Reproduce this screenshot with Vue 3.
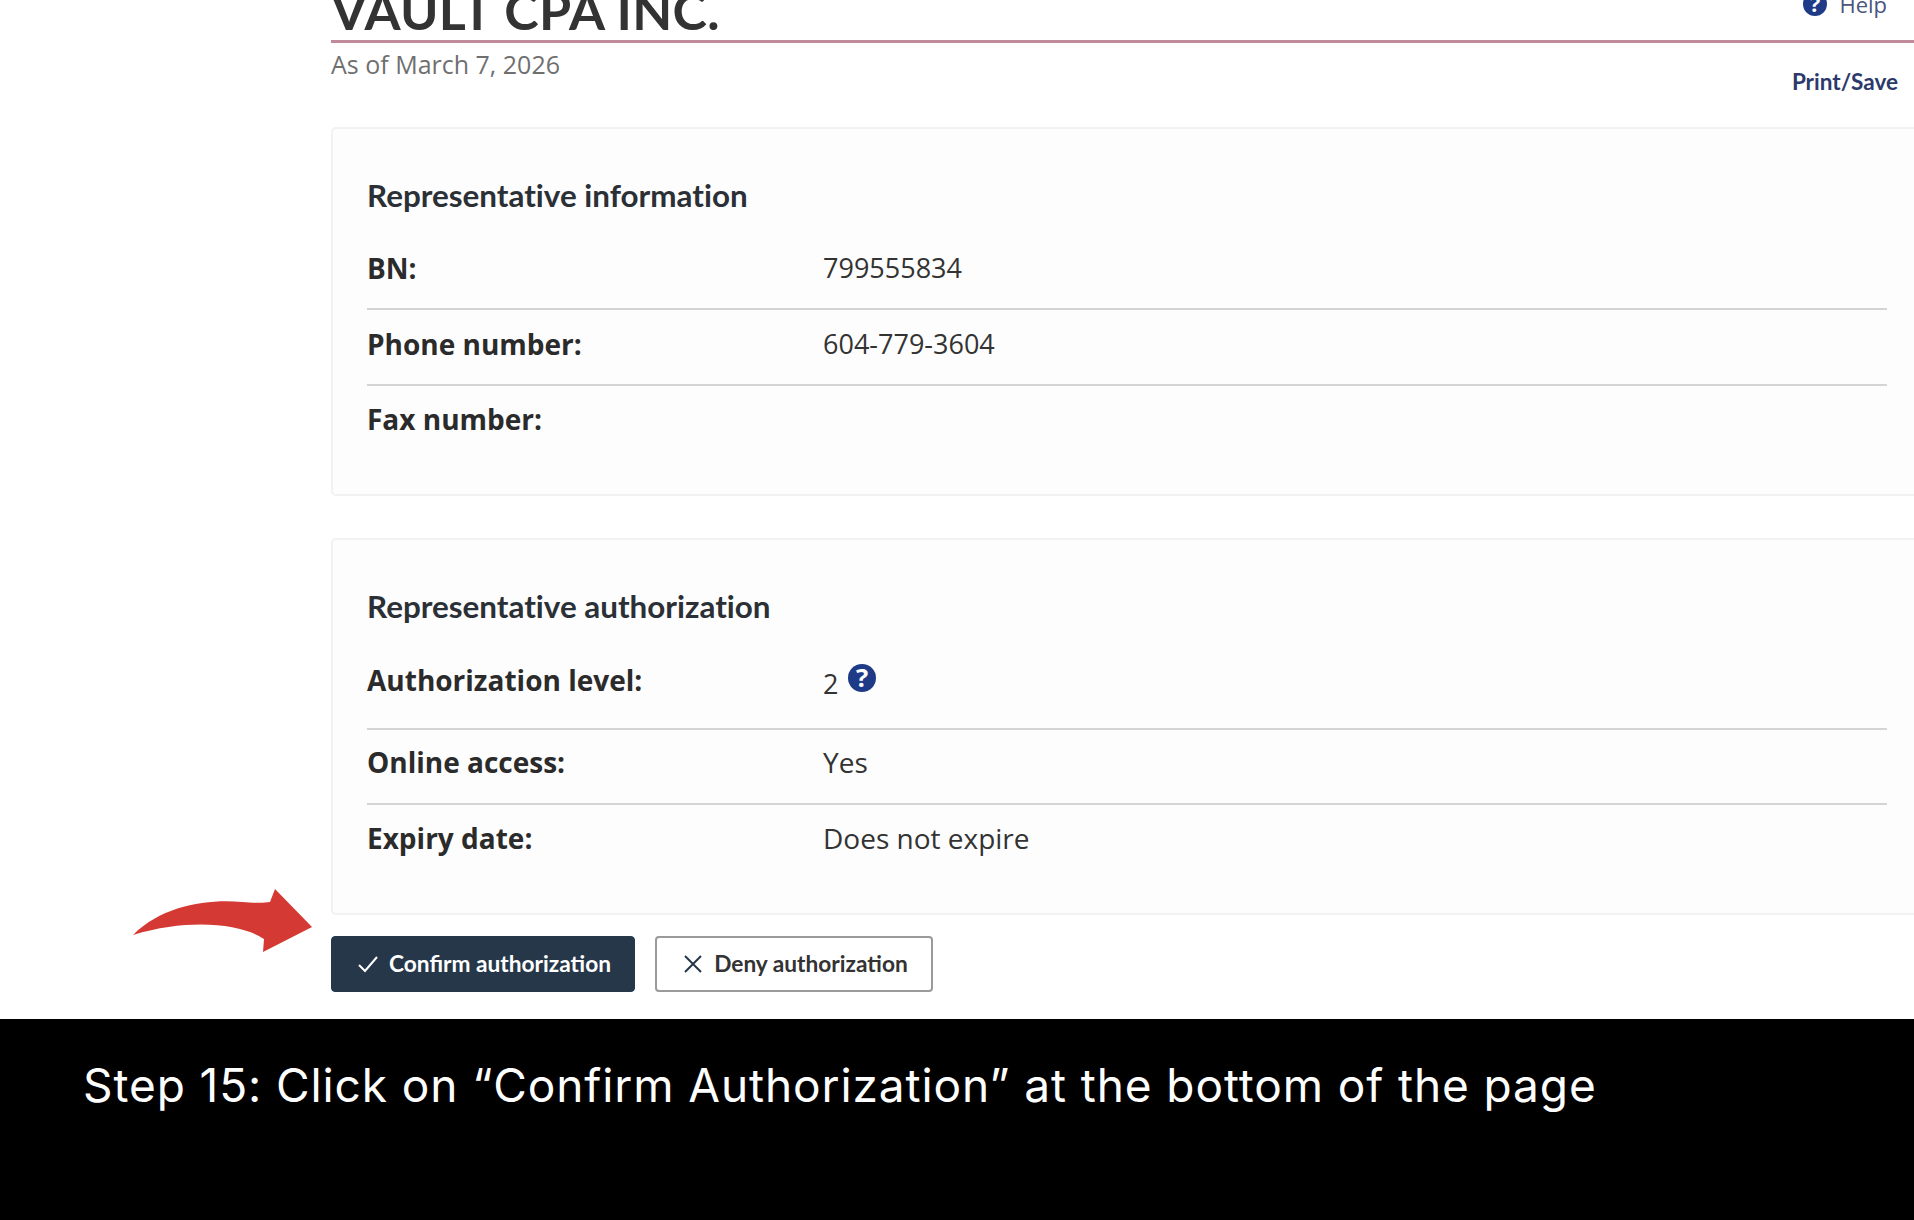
<script setup>
const infoRows = [
  { label: 'BN:', value: '799555834' },
  { label: 'Phone number:', value: '604-779-3604' },
  { label: 'Fax number:', value: '' },
]
const authRows = [
  { label: 'Online access:', value: 'Yes' },
  { label: 'Expiry date:', value: 'Does not expire' },
]
</script>

<template>
  <div class="page">
    <main class="content">
      <header class="head">
        <h1 class="title">VAULT CPA INC.</h1>
        <a class="help">
          <svg class="q help-q" viewBox="0 0 24 24"><circle cx="12" cy="12" r="12" fill="#1f3b87" /><text x="12" y="19.5" text-anchor="middle" class="q-mark">?</text></svg>
          <span>Help</span>
        </a>
      </header>
      <div class="sub">
        <span class="asof">As of March 7, 2026</span>
        <a class="print">Print/Save</a>
      </div>

      <section class="card first">
        <h2 class="card-title">Representative information</h2>
        <div v-for="r in infoRows" :key="r.label" class="row">
          <span class="label">{{ r.label }}</span>
          <span class="value">{{ r.value }}</span>
        </div>
      </section>

      <section class="card second">
        <h2 class="card-title">Representative authorization</h2>
        <div class="row level">
          <span class="label">Authorization level:</span>
          <span class="value level-value">
            <span class="two">2</span>
            <svg class="q level-q" viewBox="0 0 24 24"><circle cx="12" cy="12" r="12" fill="#1f3b87" /><text x="12" y="19.5" text-anchor="middle" class="q-mark">?</text></svg>
          </span>
        </div>
        <div v-for="r in authRows" :key="r.label" class="row auth-row">
          <span class="label">{{ r.label }}</span>
          <span class="value text-value">{{ r.value }}</span>
        </div>
      </section>

      <div class="actions">
        <button class="btn primary">
          <svg class="ico" viewBox="0 0 22 22"><path d="M2 12l6 6L20 4" fill="none" stroke="#fff" stroke-width="2" /></svg>
          Confirm authorization
        </button>
        <button class="btn ghost">
          <svg class="ico" viewBox="0 0 22 22"><path d="M3 3l16 16M19 3L3 19" fill="none" stroke="#26374a" stroke-width="2" /></svg>
          Deny authorization
        </button>
      </div>
    </main>

    <footer class="caption">Step 15: Click on “Confirm Authorization” at the bottom of the page</footer>

    <svg class="arrow" viewBox="0 0 184 66" width="184" height="66">
      <path d="M0 46 C30 16 75 10 109 13 C122 14 131 14 137 13 L142 0 L179 38 L130 63 L131 50 C110 36 60 28 0 46 Z" fill="#d43a33" />
    </svg>
  </div>
</template>

<style scoped>
.page {
  position: relative;
  width: 1914px;
  height: 1220px;
  overflow: hidden;
  background: #fff;
  font-family: "Open Sans", sans-serif;
  color: #2b2b2b;
}
.content {
  height: 1019px;
  margin-left: 331px;
  overflow: hidden;
}
.head {
  display: flex;
  justify-content: space-between;
  align-items: flex-end;
  height: 43px;
  border-bottom: 3px solid #c08a9a;
  box-sizing: border-box;
}
.title {
  margin: 0;
  font: 700 52px/60px Lato, sans-serif;
  letter-spacing: 0.3px;
  color: #333;
}
.help {
  display: flex;
  align-items: center;
  gap: 12px;
  margin-right: 27px;
  margin-bottom: 24px;
  font: 400 22px/24px "Open Sans", sans-serif;
  color: #4a5580;
}
.q-mark {
  font: 700 22px "Open Sans", sans-serif;
  fill: #fff;
}
.help-q {
  width: 24px;
  height: 24px;
}
.sub {
  display: flex;
  justify-content: space-between;
  align-items: flex-start;
  height: 84px;
  padding-top: 4px;
  box-sizing: border-box;
}
.asof {
  font-size: 25px;
  line-height: 34px;
  color: #6f6f6f;
}
.print {
  margin-top: 22px;
  margin-right: 16px;
  font: 700 22.5px/26px Lato, sans-serif;
  color: #2c3a6b;
}
.card {
  box-sizing: border-box;
  width: 1640px;
  padding-left: 34px;
  padding-right: 82px;
  background: #fdfdfd;
  border: 2px solid #f2f2f2;
  border-radius: 5px;
}
.first {
  height: 369px;
  padding-top: 46px;
  margin-bottom: 42px;
}
.second {
  height: 377px;
  padding-top: 46px;
}
.card-title {
  margin: 0 0 19px;
  font: 700 31.4px/40px Lato, sans-serif;
  font-variant-ligatures: none;
  color: #2b3036;
}
.row {
  display: flex;
  align-items: center;
  height: 76px;
  padding-bottom: 7px;
  box-sizing: border-box;
  border-bottom: 2px solid #d4d4d4;
  font-size: 27px;
}
.row:last-child {
  border-bottom: 0;
  padding-bottom: 10px;
}
.auth-row {
  height: 75px;
  padding-bottom: 9px;
}
.level {
  height: 85px;
  padding-bottom: 14px;
}
.label {
  width: 456px;
  flex: none;
  font-size: 28px;
  font-weight: 700;
  color: #2b2b2b;
}
.value {
  color: #333;
}
.text-value {
  font-size: 28px;
}
.level-value {
  display: flex;
  align-items: flex-start;
  align-self: flex-start;
  gap: 10px;
  margin-top: 19px;
}
.two {
  margin-top: 1px;
}
.level-q {
  width: 28px;
  height: 28px;
}
.actions {
  display: flex;
  gap: 20px;
  margin-top: 21px;
}
.btn {
  display: flex;
  align-items: center;
  justify-content: center;
  gap: 10px;
  height: 56px;
  border-radius: 4px;
  font: 700 22.7px/1 Lato, sans-serif;
  box-sizing: border-box;
  padding: 0 0 0 2px;
}
.primary {
  width: 304px;
  background: #26374a;
  color: #fff;
  border: 1px solid #26374a;
}
.ghost {
  width: 278px;
  background: #fff;
  color: #333;
  border: 2px solid #9a9a9a;
}
.ico {
  width: 22px;
  height: 22px;
}
.caption {
  box-sizing: border-box;
  height: 201px;
  background: #000;
  color: #fff;
  padding: 34px 0 0 83px;
  font: 400 46px/64px Inter, sans-serif;
  letter-spacing: 0.9px;
  white-space: nowrap;
}
.arrow {
  position: absolute;
  left: 133px;
  top: 889px;
}
</style>
